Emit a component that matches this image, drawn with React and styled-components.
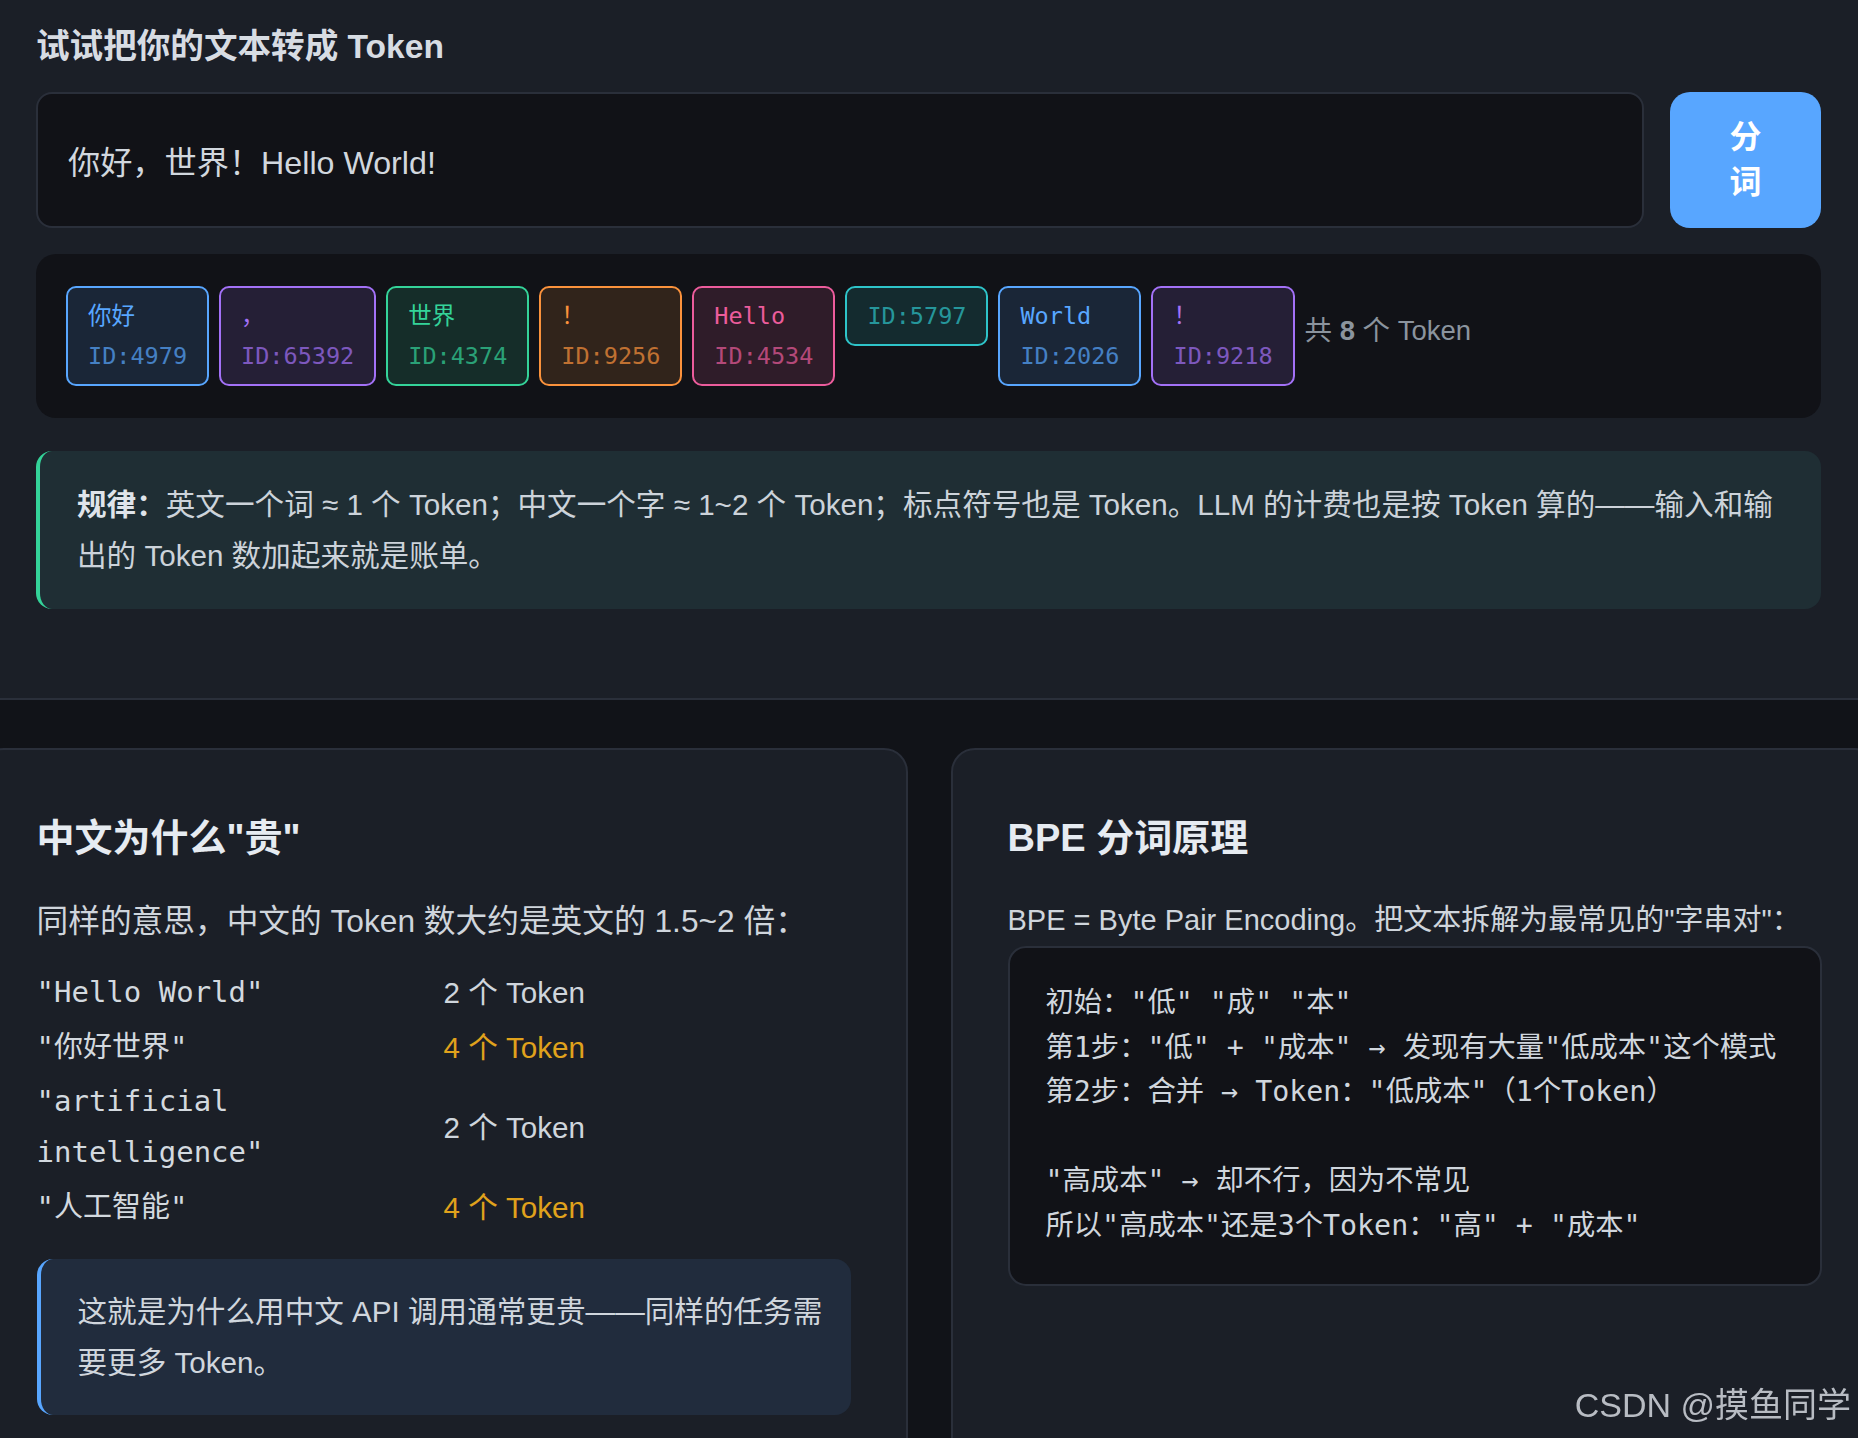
import React from 'react';
import styled, { createGlobalStyle } from 'styled-components';

const GlobalStyle = createGlobalStyle`
  html, body {
    margin: 0;
    padding: 0;
    background: #111318;
    overflow: hidden;
  }
  * { box-sizing: border-box; }
`;

const SANS = `"Liberation Sans", "Noto Sans CJK SC", sans-serif`;
const MONO = `"DejaVu Sans Mono", "Noto Sans CJK SC", monospace`;

const Page = styled.div`
  font-family: ${SANS};
  color: #c9d1d9;
  min-height: 1438px;
`;

/* ---------- tokenizer playground ---------- */
const Playground = styled.section`
  background: #1b1f27;
  padding: 22px 37px 89px 36px;
  border-bottom: 2px solid #2a2f3a;
`;

const PlayTitle = styled.h2`
  margin: 0 0 20px;
  font-size: 33.6px;
  line-height: 50px;
  font-weight: 700;
  color: #d7dce3;
`;

const InputRow = styled.div`
  display: flex;
  gap: 26px;
  height: 136px;
`;

const TextInput = styled.input`
  flex: 1;
  min-width: 0;
  height: 100%;
  background: #111217;
  border: 2px solid #2a2f3a;
  border-radius: 16px;
  padding: 0 30px;
  font-family: ${SANS};
  font-size: 32.2px;
  color: #d1d7de;
  outline: none;
`;

const SplitButton = styled.button`
  width: 151px;
  flex: none;
  padding: 0 45px;
  border: none;
  border-radius: 20px;
  background: #58a6ff;
  color: #ffffff;
  font-family: ${SANS};
  font-size: 32px;
  font-weight: 700;
  line-height: 45px;
  cursor: pointer;
`;

const TokenPanel = styled.div`
  margin-top: 26px;
  background: #111217;
  border-radius: 20px;
  padding: 32px 30px;
  display: flex;
  flex-wrap: wrap;
  align-items: flex-start;
  gap: 10px;
`;

const Chip = styled.div`
  display: flex;
  flex-direction: column;
  padding: 8px 20px;
  border: 2px solid rgb(${p => p.$rgb});
  background: rgba(${p => p.$rgb}, 0.14);
  border-radius: 10px;
  font-family: ${MONO};
  font-size: 23.5px;
  line-height: 40px;
  color: rgb(${p => p.$rgb});
`;

const ChipText = styled.div``;

const ChipId = styled.div`
  opacity: 0.7;
`;

const TokenCount = styled.span`
  align-self: center;
  margin-bottom: 10px;
  font-size: 27.5px;
  line-height: 40px;
  color: #8b949e;
  b { font-weight: 700; }
`;

const RuleBox = styled.div`
  margin-top: 33px;
  background: #1f2e34;
  border-left: 4px solid #34d399;
  border-radius: 16px;
  padding: 28px 38px 28px 37px;
  font-size: 29.6px;
  line-height: 51px;
  color: #ccd3da;
  b { font-weight: 700; color: #dfe4ea; }
`;

/* ---------- explanation cards ---------- */
const CardsSection = styled.section`
  padding-top: 48px;
  overflow: hidden;
  display: grid;
  grid-template-columns: 928px 928px;
  justify-content: center;
  column-gap: 43px;
`;

const Card = styled.article`
  background: #1b1f27;
  border: 2px solid #2a2f3a;
  border-radius: 24px;
  padding: 64px 55px;
  min-height: 760px;
`;

const CardTitle = styled.h3`
  margin: 0 0 33px;
  font-size: 38px;
  line-height: 49px;
  font-weight: 700;
  color: #e6ebf1;
`;

const Lead = styled.p`
  margin: 0 0 ${p => p.$gap}px;
  font-size: ${p => p.$size}px;
  line-height: ${p => p.$lh}px;
  color: #cfd5dc;
`;

const CompareTable = styled.div`
  display: grid;
  grid-template-columns: 1fr 1fr;
  row-gap: 3.5px;
  align-items: center;
`;

const Phrase = styled.div`
  font-family: ${MONO};
  font-size: 29px;
  line-height: 51px;
  color: #d3d9df;
`;

const Count = styled.div`
  font-size: 29.6px;
  line-height: 51px;
  color: ${p => (p.$costly ? '#e0a21c' : '#cfd5dc')};
`;

const NoteBox = styled.div`
  margin-top: 26px;
  background: #212c3d;
  border-left: 4px solid #58a6ff;
  border-radius: 16px;
  padding: 27px 20px 27px 37px;
  font-size: 29.6px;
  line-height: 51px;
  color: #d0d6dd;
`;

const CodeBlock = styled.pre`
  margin: 0;
  background: #111217;
  border: 2px solid #2a2f3a;
  border-radius: 18px;
  padding: 33px 36px 35px;
  font-family: ${MONO};
  font-size: 28.3px;
  line-height: 44.6px;
  color: #d0d6dd;
  white-space: pre-wrap;
`;

const Watermark = styled.div`
  position: fixed;
  right: 7px;
  bottom: 13px;
  font-family: ${SANS};
  font-size: 34px;
  line-height: 40px;
  color: #b8bcc3;
  pointer-events: none;
`;

const COLORS = [
  '88,166,255',
  '163,113,247',
  '52,211,153',
  '251,146,60',
  '236,92,156',
  '46,196,201',
];

const TOKENS = [
  { text: '你好', id: 4979 },
  { text: '，', id: 65392 },
  { text: '世界', id: 4374 },
  { text: '！', id: 9256 },
  { text: 'Hello', id: 4534 },
  { text: ' ', id: 5797 },
  { text: 'World', id: 2026 },
  { text: '！', id: 9218 },
];

const COMPARE = [
  { phrase: '"Hello World"', count: '2 个 Token', costly: false },
  { phrase: '"你好世界"', count: '4 个 Token', costly: true },
  { phrase: '"artificial intelligence"', count: '2 个 Token', costly: false },
  { phrase: '"人工智能"', count: '4 个 Token', costly: true },
];

const BPE_STEPS = `初始："低" "成" "本"
第1步："低" + "成本" → 发现有大量"低成本"这个模式
第2步：合并 → Token："低成本"（1个Token）

"高成本" → 却不行，因为不常见
所以"高成本"还是3个Token："高" + "成本"`;

export default function App() {
  return (
    <Page>
      <GlobalStyle />
      <Playground>
        <PlayTitle>试试把你的文本转成 Token</PlayTitle>
        <InputRow>
          <TextInput defaultValue="你好，世界！Hello World!" />
          <SplitButton>分词</SplitButton>
        </InputRow>
        <TokenPanel>
          {TOKENS.map((tok, i) => (
            <Chip key={tok.id} $rgb={COLORS[i % COLORS.length]}>
              <ChipText>{tok.text}</ChipText>
              <ChipId>ID:{tok.id}</ChipId>
            </Chip>
          ))}
          <TokenCount>
            共 <b>{TOKENS.length}</b> 个 Token
          </TokenCount>
        </TokenPanel>
        <RuleBox>
          <b>规律：</b>英文一个词 ≈ 1 个 Token；中文一个字 ≈ 1~2 个 Token；标点符号也是 Token。LLM 的计费也是按 Token 算的——输入和输出的 Token 数加起来就是账单。
        </RuleBox>
      </Playground>

      <CardsSection>
        <Card>
          <CardTitle>中文为什么"贵"</CardTitle>
          <Lead $size={31.7} $lh={51} $gap={20}>
            同样的意思，中文的 Token 数大约是英文的 1.5~2 倍：
          </Lead>
          <CompareTable>
            {COMPARE.map(row => (
              <React.Fragment key={row.phrase}>
                <Phrase>{row.phrase}</Phrase>
                <Count $costly={row.costly}>{row.count}</Count>
              </React.Fragment>
            ))}
          </CompareTable>
          <NoteBox>
            这就是为什么用中文 API 调用通常更贵——同样的任务需要更多 Token。
          </NoteBox>
        </Card>
        <Card>
          <CardTitle>BPE 分词原理</CardTitle>
          <Lead $size={29} $lh={48} $gap={2}>
            BPE = Byte Pair Encoding。把文本拆解为最常见的"字串对"：
          </Lead>
          <CodeBlock>{BPE_STEPS}</CodeBlock>
        </Card>
      </CardsSection>

      <Watermark>CSDN @摸鱼同学</Watermark>
    </Page>
  );
}
